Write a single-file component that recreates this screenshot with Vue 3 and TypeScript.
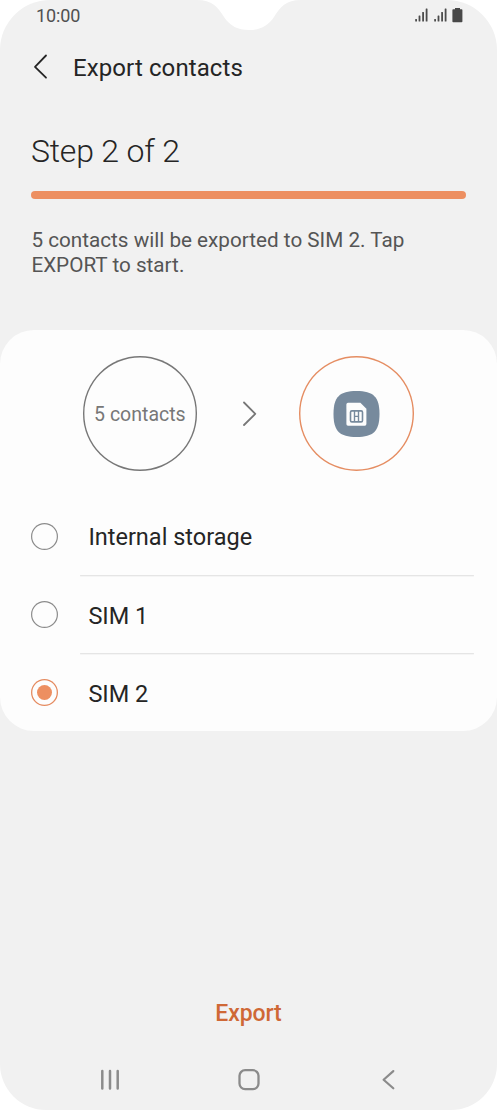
<script setup lang="ts">
import { ref } from 'vue'

const destinations: string[] = ['Internal storage', 'SIM 1', 'SIM 2']
const selected = ref('SIM 2')
const signalBars = [
  { x: 0.2, y: 11, h: 2.5 },
  { x: 3.6, y: 7.4, h: 6.1 },
  { x: 7.2, y: 4, h: 9.5 },
  { x: 10.7, y: 0.5, h: 13 },
]
</script>

<template>
  <div class="phone">
    <svg class="notch" width="104" height="31" viewBox="0 0 104 31">
      <path d="M0 0C15 0 21 7 27 17C33 26 41 30 52 30S71 26 77 17C83 7 89 0 104 0Z" fill="#fff" />
    </svg>
    <div class="status">
      <span>10:00</span>
      <div class="status-icons">
        <svg v-for="n in 2" :key="n" class="signal" width="13" height="14" viewBox="0 0 13 14">
          <rect v-for="b in signalBars" :key="b.x" :x="b.x" :y="b.y" width="1.8" :height="b.h" rx=".5" fill="#4c4c4c" />
        </svg>
        <svg class="battery" width="11" height="15" viewBox="0 0 11 15">
          <path d="M3 0H8V1.2H9.6Q10.4 1.2 10.4 2V13.4Q10.4 14.2 9.6 14.2H1.2Q.4 14.2 .4 13.4V2Q.4 1.2 1.2 1.2H3Z" fill="#484848" />
        </svg>
      </div>
    </div>
    <header class="header">
      <svg width="16" height="28" viewBox="0 0 16 28">
        <path d="M13 2.5L2 13.8L13 24.7" fill="none" stroke="#252525" stroke-width="1.8" stroke-linecap="round" stroke-linejoin="round" />
      </svg>
      <h1>Export contacts</h1>
    </header>
    <section class="progress">
      <h2>Step 2 of 2</h2>
      <div class="bar"></div>
      <p>5 contacts will be exported to SIM 2. Tap<br />EXPORT to start.</p>
    </section>
    <main class="card">
      <div class="transfer">
        <div class="circle source">5 contacts</div>
        <svg class="arrow" width="16" height="28" viewBox="0 0 16 28">
          <path d="M2 2.5L13.3 13.8L2 25" fill="none" stroke="#777" stroke-width="1.8" stroke-linecap="round" stroke-linejoin="round" />
        </svg>
        <div class="circle target">
          <svg width="48" height="48" viewBox="0 0 48 48">
            <path d="M23.5 1C40.5 1 46.5 7 46.5 24S40.5 47 23.5 47S.5 41 .5 24S6.5 1 23.5 1Z" fill="#778a9d" />
            <path d="M15 12.8H27.4L33.4 18.8V34.1Q33.4 35.7 31.8 35.7H15Q13.4 35.7 13.4 34.1V14.4Q13.4 12.8 15 12.8Z" fill="#fdfdfd" />
            <rect x="17.5" y="20.9" width="12" height="11" rx="1.4" fill="none" stroke="#778a9d" stroke-width="1.6" />
            <path d="M21.5 21V31.6M25.5 21V31.6M21.5 26.4H25.5" fill="none" stroke="#778a9d" stroke-width="1.4" />
          </svg>
        </div>
      </div>
      <div class="options" role="radiogroup">
        <div
          v-for="name in destinations"
          :key="name"
          class="option"
          role="radio"
          :aria-checked="selected === name"
          @click="selected = name"
        >
          <span class="radio" :class="{ checked: selected === name }"></span>
          <span class="label">{{ name }}</span>
        </div>
      </div>
    </main>
    <button class="export">Export</button>
    <nav class="nav">
      <svg width="22" height="22" viewBox="0 0 22 22">
        <path d="M3.3 2.1V19.5M11 2.1V19.5M18.7 2.1V19.5" stroke="#8b8b8b" stroke-width="2.5" stroke-linecap="round" />
      </svg>
      <svg width="22" height="22" viewBox="0 0 22 22">
        <rect x="1.5" y="1.2" width="19" height="19" rx="5.6" fill="none" stroke="#8b8b8b" stroke-width="2.3" />
      </svg>
      <svg width="22" height="22" viewBox="0 0 22 22">
        <path d="M16.3 2.1L6.6 10.7L16.3 19.3" fill="none" stroke="#8b8b8b" stroke-width="2.2" stroke-linecap="round" stroke-linejoin="round" />
      </svg>
    </nav>
  </div>
</template>

<style>
body {
  background: #fff;
}
</style>

<style scoped>
.phone {
  position: relative;
  display: flex;
  flex-direction: column;
  width: 497px;
  height: 1110px;
  overflow: hidden;
  border-radius: 50px 50px 46px 46px;
  background: #f1f1f1;
  font-family: Roboto, "Liberation Sans", sans-serif;
  color: #252525;
}
svg {
  display: block;
  flex: none;
}
h1, h2, p {
  margin: 0;
}
.notch {
  position: absolute;
  top: 0;
  left: 197px;
}
.status {
  display: flex;
  justify-content: space-between;
  height: 32px;
  padding: 0 34px 0 36px;
  color: #505050;
  font-size: 18px;
  letter-spacing: -0.1px;
  line-height: 32px;
}
.status-icons {
  display: flex;
  padding-top: 8px;
}
.signal {
  margin-right: 6px;
}
.battery {
  margin-left: -1px;
}
.header {
  display: flex;
  align-items: center;
  gap: 24px;
  height: 70px;
  padding-left: 33px;
}
h1 {
  padding-top: 2px;
  font-size: 24px;
  font-weight: 400;
  letter-spacing: 0.1px;
  line-height: 32px;
}
.progress {
  height: 227.5px;
  padding: 0 31px;
}
h2 {
  padding-top: 29px;
  font-size: 32px;
  font-weight: 300;
  letter-spacing: -0.2px;
  line-height: 40px;
}
.bar {
  height: 8px;
  margin-top: 20px;
  border-radius: 4px;
  background: #ed8f61;
}
p {
  margin-top: 29px;
  padding-left: 0.4px;
  color: #555;
  font-size: 20.7px;
  line-height: 24.6px;
}
.card {
  flex: none;
  height: 401.5px;
  border-radius: 34px;
  background: #fdfdfd;
}
.transfer {
  display: flex;
  align-items: center;
  height: 115px;
  padding: 26.5px 83px 0 82.5px;
}
.circle {
  display: flex;
  align-items: center;
  justify-content: center;
  box-sizing: border-box;
  width: 115px;
  height: 115px;
  border-radius: 50%;
  box-shadow: inset 0 0 0 1.4px #777;
}
.source {
  padding-top: 2px;
  color: #777;
  font-size: 19.5px;
}
.arrow {
  margin: 0 41px 0 45px;
}
.target {
  box-shadow: inset 0 0 0 1.4px #e58d62;
}
.options {
  padding: 25.5px 23px 0 31px;
}
.option {
  display: flex;
  align-items: center;
  height: 78.3px;
}
.radio {
  display: flex;
  flex: none;
  align-items: center;
  justify-content: center;
  width: 27px;
  height: 27px;
  margin-top: 1px;
  border-radius: 50%;
  box-shadow: inset 0 0 0 1.2px #8c8c8c;
}
.radio.checked {
  box-shadow: inset 0 0 0 1.3px #e58b60;
}
.radio.checked::after {
  width: 15px;
  height: 15px;
  border-radius: 50%;
  background: #ed8f61;
  content: '';
}
.label {
  display: flex;
  flex: 1;
  align-items: center;
  box-sizing: border-box;
  height: 100%;
  margin-left: 22px;
  padding: 3.4px 0 0 8.4px;
  font-size: 23.5px;
}
.option:not(:last-child) .label {
  box-shadow: 0 1.4px 0 -0.1px #e5e5e5;
}
.export {
  align-self: center;
  margin-top: 266px;
  padding: 0;
  border: 0;
  background: none;
  color: #cf6836;
  font: 500 23px/34px Roboto, "Liberation Sans", sans-serif;
  letter-spacing: -0.1px;
}
.nav {
  display: flex;
  justify-content: space-between;
  padding: 38px 98px 0 99px;
}
</style>
